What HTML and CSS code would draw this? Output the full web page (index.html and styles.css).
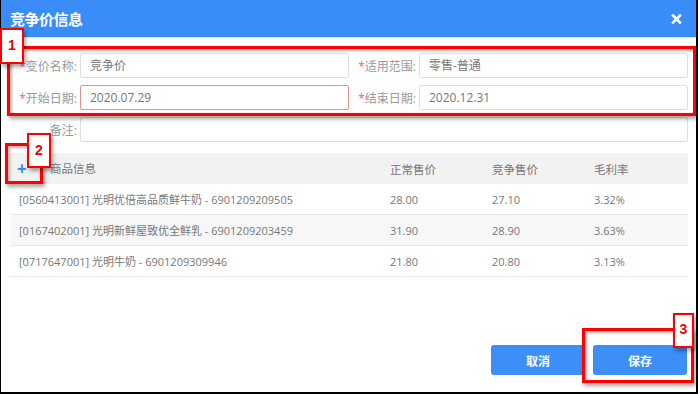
FILE: index.html
```html
<!DOCTYPE html>
<html lang="zh-CN">
<head>
  <meta charset="UTF-8">
  <title>竞争价信息</title>
  <link rel="stylesheet" href="styles.css">
</head>
<body>
<div class="dialog">
  <header class="dialog-header">
    <div class="dialog-title">竞争价信息</div>
    <svg class="close-icon" width="11" height="10" viewBox="0 0 11 10">
      <path d="M2 1.5 L9 8.5 M9 1.5 L2 8.5" stroke="#fff" stroke-width="2.6" stroke-linecap="square"/>
    </svg>
  </header>
  <main class="dialog-body">
    <div class="form-row">
      <div class="field"><label><span class="req">*</span>变价名称:</label><div class="input">竞争价</div></div>
      <div class="field"><label><span class="req">*</span>适用范围:</label><div class="input">零售-普通</div></div>
    </div>
    <div class="form-row">
      <div class="field"><label><span class="req">*</span>开始日期:</label><div class="input input-error">2020.07.29</div></div>
      <div class="field"><label><span class="req">*</span>结束日期:</label><div class="input">2020.12.31</div></div>
    </div>
    <div class="form-row">
      <div class="field field-wide"><label>备注:</label><div class="input"></div></div>
    </div>

    <table class="goods-table">
      <thead>
        <tr>
          <th class="col-name"><span class="add-btn">+</span>商品信息</th>
          <th class="col-num">正常售价</th>
          <th class="col-num">竞争售价</th>
          <th class="col-rate">毛利率</th>
        </tr>
      </thead>
      <tbody>
        <tr>
          <td>[0560413001] 光明优倍高品质鲜牛奶 - 6901209209505</td>
          <td>28.00</td><td>27.10</td><td>3.32%</td>
        </tr>
        <tr class="alt">
          <td>[0167402001] 光明新鲜屋致优全鲜乳 - 6901209203459</td>
          <td>31.90</td><td>28.90</td><td>3.63%</td>
        </tr>
        <tr>
          <td>[0717647001] 光明牛奶 - 6901209309946</td>
          <td>21.80</td><td>20.80</td><td>3.13%</td>
        </tr>
      </tbody>
    </table>

    <div class="actions">
      <button class="btn">取消</button>
      <button class="btn">保存</button>
    </div>
  </main>

  <!-- annotation marks laid over the dialog -->
  <div class="mark mark-1"></div>
  <div class="tag tag-1">1</div>
  <div class="mark mark-2"></div>
  <div class="tag tag-2">2</div>
  <div class="mark mark-3"></div>
  <div class="tag tag-3">3</div>
</div>
</body>
</html>
```

FILE: styles.css
```css
html, body {
  margin: 0;
  padding: 0;
}
body {
  width: 698px;
  height: 394px;
  font-family: "Open Sans", "Noto Sans CJK SC", sans-serif;
  background: #fff;
}
.dialog {
  position: relative;
  box-sizing: border-box;
  width: 698px;
  height: 394px;
  border-left: 1px solid #000;
  border-right: 2px solid #000;
  border-bottom: 2px solid #000;
  display: flex;
  flex-direction: column;
}
.dialog-header {
  height: 37px;
  background: #3a8cf8;
  border-bottom: 1px solid #d6e5fc;
  display: flex;
  align-items: center;
  justify-content: space-between;
  padding: 0 14px 0 9px;
}
.dialog-title {
  color: #fff;
  font-family: "Noto Sans CJK SC", sans-serif;
  font-size: 15px;
  font-weight: bold;
  letter-spacing: -0.5px;
}
.dialog-body {
  flex: 1;
  padding: 15px 8px 0 9px;
  display: flex;
  flex-direction: column;
}
.form-row {
  display: flex;
  margin-bottom: 7px;
}
.field {
  flex: 1;
  display: flex;
  align-items: center;
}
.field label {
  width: 70px;
  box-sizing: border-box;
  padding-right: 3px;
  text-align: right;
  font-size: 12px;
  color: #999;
}
.req {
  color: #f06060;
}
.input {
  flex: 1;
  height: 25px;
  box-sizing: border-box;
  border: 1px solid #dedede;
  border-radius: 2px;
  padding: 0 9px;
  font-size: 12px;
  line-height: 23px;
  color: #777;
}
.input-error {
  border-color: #e39189;
}
.goods-table {
  margin-top: 4px;
  width: 100%;
  border-collapse: collapse;
  font-size: 11px;
  color: #777;
}
.goods-table th {
  background: #f2f2f2;
  height: 31px;
  font-weight: normal;
  text-align: left;
  font-size: 11.5px;
  color: #777;
  padding: 0;
}
.goods-table td {
  height: 30px;
  border-bottom: 1px solid #e8e8e8;
  padding: 0;
}
.goods-table td:first-child {
  padding-left: 9px;
}
.goods-table tr.alt td {
  background: #f7f7f7;
}
.col-name {
  width: 380px;
}
.col-num {
  width: 102px;
}
.add-btn {
  display: inline-block;
  width: 33px;
  padding-left: 7px;
  color: #3a8cf8;
  font-size: 17px;
  font-weight: bold;
  vertical-align: middle;
  line-height: 16px;
}
.actions {
  margin-top: auto;
  margin-bottom: 17px;
  display: flex;
  justify-content: flex-end;
  gap: 8px;
  padding-right: 1px;
}
.btn {
  width: 94px;
  height: 30px;
  border: none;
  border-radius: 3px;
  background: #3d8ff7;
  color: #fff;
  font-family: "Noto Sans CJK SC", sans-serif;
  font-size: 12px;
  font-weight: bold;
}

/* annotations */
.mark {
  position: absolute;
  box-sizing: border-box;
  border: 3px solid #f00;
  box-shadow: 2px 3px 4px rgba(0,0,0,.35), inset 2px 2px 3px rgba(0,0,0,.3);
}
.tag {
  position: absolute;
  box-sizing: border-box;
  background: #fff;
  border: 2px solid #f00;
  color: #e00;
  font-family: "Liberation Sans", sans-serif;
  font-weight: bold;
  font-size: 14px;
  text-align: center;
  box-shadow: 2px 3px 4px rgba(0,0,0,.35);
}
.mark-1 { left: 6px; top: 46px; width: 689px; height: 70px; }
.tag-1 { left: -1px; top: 28px; width: 24px; height: 36px; line-height: 30px; }
.mark-2 { left: 4px; top: 143px; width: 38px; height: 41px; }
.tag-2 { left: 26px; top: 133px; width: 24px; height: 35px; line-height: 30px; }
.mark-3 { left: 581px; top: 328px; width: 112px; height: 55px; }
.tag-3 { left: 672px; top: 313px; width: 21px; height: 35px; line-height: 28px; }
```
